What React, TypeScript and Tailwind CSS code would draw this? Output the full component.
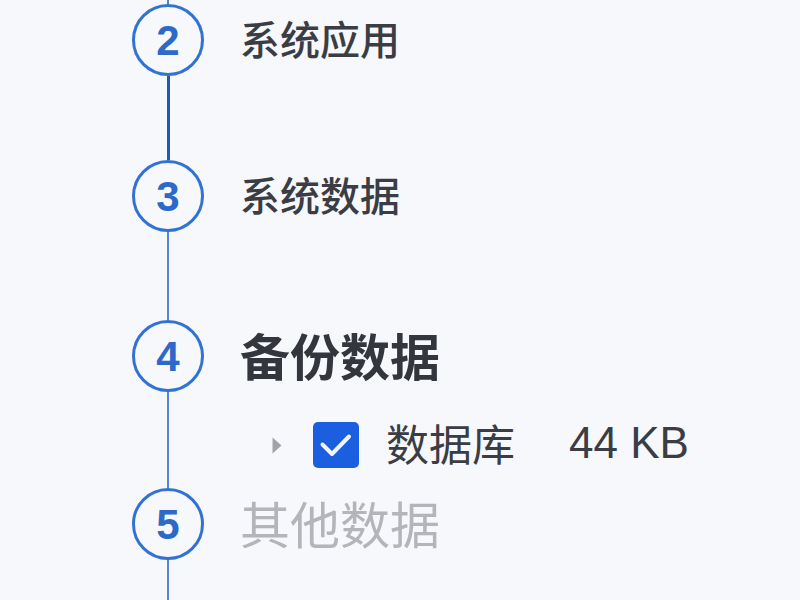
import React from "react";

const cjk = { fontFamily: '"Noto Sans CJK SC", "Noto Sans", sans-serif' };
const latin = { fontFamily: '"Liberation Sans", Arial, sans-serif' };

type StepProps = {
  n: number;
  lineClass: string;
  children: React.ReactNode;
};

function Step({ n, lineClass, children }: StepProps) {
  return (
    <div className="flex">
      <div className="flex w-[72px] flex-col items-center">
        <div
          className="flex h-[72px] w-[72px] items-center justify-center rounded-full border-[3px] border-[#3272d2] text-[42px] font-bold text-[#2c69c9]"
          style={latin}
        >
          {n}
        </div>
        <div className={lineClass} />
      </div>
      <div className="ml-[36px] flex flex-col">{children}</div>
    </div>
  );
}

export default function App() {
  return (
    <div className="h-[600px] w-full overflow-hidden bg-[#f7f8fb]">
      <div className="pl-[132px]">
        <div className="flex w-[72px] justify-center">
          <div className="h-[4px] w-[2px] bg-[#4a84d6]" />
        </div>

        <Step n={2} lineClass="h-[84px] w-[3px] bg-[#1c58c2]">
          <div
            className="flex h-[72px] items-center pb-[4px] text-[40px] leading-none font-medium text-[#3b3d45]"
            style={cjk}
          >
            系统应用
          </div>
        </Step>

        <Step n={3} lineClass="h-[88px] w-[2px] bg-[#5089d8]">
          <div
            className="flex h-[72px] items-center pb-[4px] text-[40px] leading-none font-medium text-[#3b3d45]"
            style={cjk}
          >
            系统数据
          </div>
        </Step>

        <Step n={4} lineClass="h-[96px] w-[2px] bg-[#5089d8]">
          <div
            className="flex h-[72px] items-center pb-[4px] text-[50px] leading-none font-bold text-[#34363e]"
            style={cjk}
          >
            备份数据
          </div>
          <div className="mt-[30px] flex h-[46px] items-center">
            <svg
              width="10"
              height="17"
              viewBox="0 0 10 17"
              className="ml-[32px]"
            >
              <path d="M0.5 0.5 L9.5 8.5 L0.5 16.5 Z" fill="#a0a3aa" />
            </svg>
            <div className="ml-[31px] h-[46px] w-[46px] rounded-[5px] bg-[#1b5fe0]">
              <svg width="46" height="46" viewBox="0 0 46 46" fill="none">
                <path
                  d="M9.5 22.5 L19 32 L36 14.5"
                  stroke="#eef5ff"
                  strokeWidth="4"
                  strokeLinecap="round"
                  strokeLinejoin="round"
                />
              </svg>
            </div>
            <span
              className="ml-[27px] mb-[6px] text-[43px] leading-none font-normal text-[#3b3d45]"
              style={cjk}
            >
              数据库
            </span>
            <span
              className="ml-[54px] mb-[4px] text-[44px] leading-none text-[#3b3d45]"
              style={latin}
            >
              44 KB
            </span>
          </div>
        </Step>

        <Step n={5} lineClass="h-[60px] w-[2px] bg-[#5089d8]">
          <div
            className="flex h-[72px] items-center pb-[4px] text-[50px] leading-none font-normal text-[#b3b5bb]"
            style={cjk}
          >
            其他数据
          </div>
        </Step>
      </div>
    </div>
  );
}
